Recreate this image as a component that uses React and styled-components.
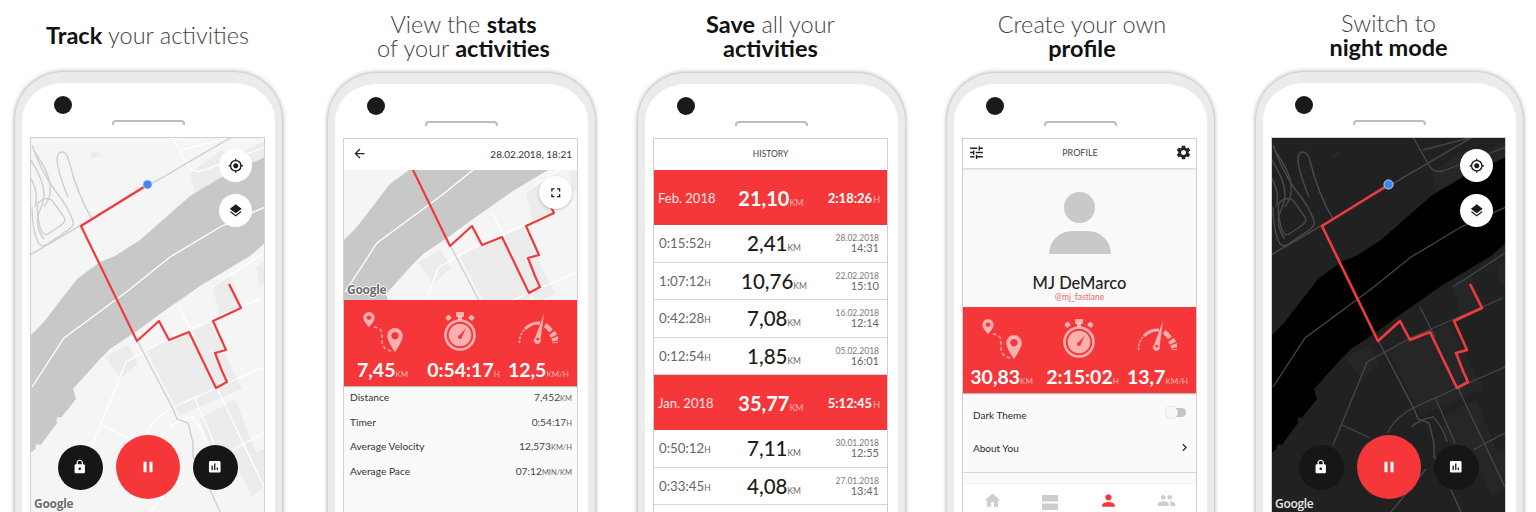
import React from "react";
import styled, { createGlobalStyle } from "styled-components";
import {
  MdArrowBack,
  MdAssessment,
  MdChevronRight,
  MdFullscreen,
  MdHome,
  MdLayers,
  MdLock,
  MdMyLocation,
  MdPause,
  MdPeople,
  MdPerson,
  MdSettings,
  MdTune,
} from "react-icons/md";

const RED = "#f53739";

const Global = createGlobalStyle`
  html, body { margin: 0; padding: 0; background: #fff; }
  body { font-family: "Lato", "Liberation Sans", sans-serif; }
`;

const Page = styled.div`
  display: flex;
  width: 1536px;
  height: 512px;
  overflow: hidden;
  padding-left: 15px;
  box-sizing: border-box;
`;

const Column = styled.section`
  flex: 0 0 267px;
  margin-left: ${p => p.$gap || 0}px;
`;

const Title = styled.h2`
  height: ${p => (p.$low ? 73 : 72)}px;
  margin: 0;
  padding: 0 0 2px ${p => p.$nudge || 0}px;
  display: flex;
  flex-direction: column;
  justify-content: center;
  align-items: center;
  font-size: 23.5px;
  line-height: 24px;
  font-weight: 300;
  color: #444;
  white-space: nowrap;
  box-sizing: border-box;
  transform: translateX(-1px);

  b {
    display: inline-block;
    font-weight: 700;
    color: #111;
  }
`;

const Phone = styled.div`
  height: 520px;
  box-sizing: border-box;
  padding: 0 10px 0 9px;
  background: #fff;
  border: solid #ebebeb;
  border-width: 11px 7px 0;
  border-radius: 48px 48px 0 0;
  box-shadow: 0 0 5px rgba(0, 0, 0, 0.42);
`;

const Camera = styled.div`
  width: 18px;
  height: 18px;
  margin: 13px 0 0 23px;
  border-radius: 50%;
  background: #1a1a1a;
`;

const Speaker = styled.div`
  width: 73px;
  height: 5px;
  margin: 6px auto 13px;
  box-sizing: border-box;
  border: 2px solid #bdbdbd;
  border-bottom: 0;
  border-radius: 4px 4px 0 0;
`;

const Screen = styled.div`
  width: 233px;
  height: 376px;
  overflow: hidden;
  display: flex;
  flex-direction: column;
  background: ${p => p.$bg || "#fff"};
  box-shadow: 0 0 0 1px #cfcfcf;
  color: #333;
`;

const MapBox = styled.div`
  position: relative;
  flex: 0 0 ${p => p.$h}px;
  height: ${p => p.$h}px;
  overflow: hidden;

  svg.map {
    display: block;
  }
`;

const GoogleMark = styled.span`
  position: absolute;
  left: 3px;
  bottom: 2px;
  font-family: "Open Sans", sans-serif;
  font-size: 12px;
  font-weight: ${p => (p.$dark ? 600 : 700)};
  letter-spacing: -0.3px;
  color: ${p => (p.$dark ? "#e8e8e8" : "#6c6c6c")};
  text-shadow: ${p =>
    p.$dark
      ? "none"
      : "1px 0 0 #fff, -1px 0 0 #fff, 0 1px 0 #fff, 0 -1px 0 #fff"};
`;

const RoundButton = styled.button`
  position: absolute;
  left: ${p => p.$left || 188}px;
  top: ${p => p.$top}px;
  width: 33px;
  height: 33px;
  padding: 0;
  border: 0;
  border-radius: 50%;
  background: #fff;
  color: #1a1a1a;
  font-size: 15.5px;
  display: flex;
  align-items: center;
  justify-content: center;
  box-shadow: ${p => (p.$shadow ? "0 1px 3px rgba(0,0,0,.25)" : "none")};
`;

const Controls = styled.div`
  position: absolute;
  left: 0;
  right: 0;
  top: 297px;
  height: 64px;
  display: flex;
  align-items: center;
  justify-content: center;
  gap: 13px;
`;

const ControlButton = styled.button`
  width: ${p => (p.$main ? 64 : 45)}px;
  height: ${p => (p.$main ? 64 : 45)}px;
  padding: 0;
  border: 0;
  border-radius: 50%;
  background: ${p => (p.$main ? RED : "#171515")};
  color: #fff;
  font-size: ${p => (p.$main ? 18 : 15.5)}px;
  display: flex;
  align-items: center;
  justify-content: center;
`;

const Header = styled.header`
  flex: 0 0 ${p => p.$h || 31}px;
  display: flex;
  align-items: center;
  justify-content: space-between;
  box-sizing: border-box;
  padding: ${p => p.$pad || "0 5px 2px 8px"};
  background: #fff;
  color: #222;
  font-size: ${p => p.$icon || 15}px;
  box-shadow: ${p => (p.$line ? "0 1px 2px rgba(0,0,0,.18)" : "none")};
  position: relative;
`;

const HeaderDate = styled.span`
  font-size: 10px;
  color: #333;
`;

const HeaderLabel = styled.span`
  font-size: 9px;
  color: #444;
`;

const HeaderTitle = styled.div`
  flex: 0 0 31px;
  box-sizing: border-box;
  padding-bottom: 2px;
  display: flex;
  align-items: center;
  justify-content: center;
  font-size: 8.5px;
  color: #444;
  background: #fff;
`;

const StatsPanel = styled.div`
  flex: 0 0 ${p => p.$h}px;
  display: grid;
  grid-template-columns: repeat(3, 1fr);
  background: ${RED};
  box-shadow: 0 1px 1px rgba(0, 0, 0, 0.25);
  position: relative;
`;

const Stat = styled.div`
  display: flex;
  flex-direction: column;
  align-items: center;
  padding-top: 12px;

  svg {
    height: 40px;
    display: block;
  }
`;

const StatValue = styled.div`
  margin: 6px 0 0 ${p => p.$nudge || 0}px;
  font-size: 19.5px;
  line-height: 24px;
  font-weight: 700;
  color: #fff;
  white-space: nowrap;
`;

const Unit = styled.small`
  font-size: ${p => p.$size || 8}px;
  font-weight: 400;
  margin-left: ${p => p.$space || 0}px;
  color: ${p => p.$color || "#666"};
`;

const InfoList = styled.div`
  flex: 1;
  margin-top: -1px;
  padding-top: 0;
  background: #fafafa;
`;

const InfoRow = styled.div`
  height: 24.5px;
  display: flex;
  align-items: center;
  justify-content: space-between;
  padding: 0 5px 0 6px;
  font-size: 10.2px;
  color: #333;
`;

const InfoValue = styled.span`
  color: #444;
`;

const MonthRow = styled.div`
  flex: 0 0 55px;
  display: grid;
  grid-template-columns: 1fr auto 1fr;
  align-items: center;
  padding: 0 7px 0 4px;
  background: ${RED};
  color: #fff;
`;

const MonthName = styled.span`
  font-size: 13px;
  color: #fde8e8;
`;

const MonthDistance = styled.span`
  font-size: 20px;
  font-weight: 700;
  padding-left: 4px;
`;

const MonthTime = styled.span`
  text-align: right;
  font-size: 13px;
  font-weight: 700;
`;

const RunRow = styled.div`
  flex: 0 0 37.5px;
  box-sizing: border-box;
  display: grid;
  grid-template-columns: 1fr auto 1fr;
  align-items: center;
  padding: 0 8px 0 5px;
  border-bottom: 1px solid #d6d6d6;
`;

const RunTime = styled.span`
  font-size: 13.3px;
  color: #666;
`;

const RunDistance = styled.span`
  font-size: 20.5px;
  font-weight: 500;
  color: #1c1c1c;
  padding-left: 10px;
`;

const RunWhen = styled.span`
  display: flex;
  flex-direction: column;
  align-items: flex-end;
  font-size: 8.5px;
  line-height: 10px;
  color: #7a7a7a;

  b {
    font-size: 11px;
    font-weight: 400;
    color: #666;
  }
`;

const ProfileTop = styled.div`
  flex: 0 0 139px;
  display: flex;
  flex-direction: column;
  align-items: center;
  background: #f9f9f9;
`;

const Avatar = styled.div`
  width: 94px;
  height: 94px;
  margin-top: 10px;
  border-radius: 50%;
  border: 1px solid #f6f6f6;
  display: flex;
  flex-direction: column;
  align-items: center;
  box-sizing: border-box;
`;

const AvatarHead = styled.div`
  width: 31px;
  height: 31px;
  margin-top: 13px;
  border-radius: 50%;
  background: #c9c9c9;
`;

const AvatarBody = styled.div`
  width: 62px;
  height: 23px;
  margin-top: 8px;
  border-radius: 31px 31px 0 0;
  background: #c9c9c9;
`;

const ProfileName = styled.div`
  margin-top: 1px;
  font-size: 16.5px;
  line-height: 20px;
  font-weight: 500;
  color: #222;
`;

const ProfileHandle = styled.div`
  font-size: 8.5px;
  line-height: 9px;
  color: #e86a6a;
`;

const SettingsList = styled.div`
  flex: 0 0 80px;
  padding: 5px 4px 0 10px;
  box-sizing: border-box;
  background: #fafafa;
  border-bottom: 1px solid #d8d8d8;
`;

const SettingRow = styled.div`
  height: 33px;
  display: flex;
  align-items: center;
  justify-content: space-between;
  font-size: 10px;
  color: #2a2a2a;
`;

const Toggle = styled.div`
  position: relative;
  width: 20px;
  height: 9px;
  margin: -4px 6px 0 0;
  border-radius: 5px;
  background: #c4c4c4;

  &::before {
    content: "";
    position: absolute;
    left: -1px;
    top: -2px;
    width: 13px;
    height: 13px;
    border-radius: 50%;
    background: #f6f6f6;
    box-shadow: 0 0 1px rgba(0, 0, 0, 0.25);
  }
`;

const BottomNav = styled.nav`
  margin-top: 10px;
  flex: 1;
  display: grid;
  grid-template-columns: repeat(4, 1fr);
  justify-items: center;
  padding-top: 7px;
  background: #fff;
  border-top: 1px solid #f0f0f0;
  font-size: 19px;
`;

const NavItem = styled.span`
  color: ${p => (p.$active ? RED : "#cdcdcd")};
`;

// the route is the same in every map, only the window onto it changes
const ROUTE =
  "117,48 51,89 107,204 129,184 139,203 159,195 186,251 197,245 192,234 185,216 196,213 183,184 211,171 199,147";

const WATER =
  "0,199 13,186 47,142 70,125 85,119 110,103 160,59 195,38 235,20 235,106 220,119 170,149 130,177 107,194 80,212 70,222 43,252 46,262 30,282 10,309 0,316";

const BLOCKS = [
  "160,36 190,14 214,14 235,4 235,22 195,38 165,56",
  "182,147 200,138 212,168 190,180",
  "226,130 235,124 235,146 230,150",
  "116,213 180,186 212,252 150,278",
  "170,282 205,262 228,320 190,340",
  "50,172 62,150 66,160 56,180",
  "205,325 234,312 234,350 222,360",
  "75,220 98,208 108,226 90,242",
  "60,17 68,14 70,19 62,22",
];

const SOFT_ROADS = [
  "M2,250 L34,201 L99,153 L140,120 L190,90 L235,70",
  "M96,225 L139,201 L232,161",
  "M142,271 L186,251 L234,230",
  "M62,308 L86,250 L96,225",
  "M71,288 L99,301",
  "M117,296 Q122,282 142,271",
  "M187,251 L234,350",
  "M164,260 L184,306",
  "M202,313 L234,296",
  "M149,170 L164,200",
  "M182,150 L234,116",
  "M142,0 L159,30 Q164,36 172,34 L235,10",
  "M152,13 L202,0",
  "M140,290 Q150,282 162,280 Q172,290 176,305",
  "M155,332 L120,375",
];

const HARD_ROADS = [
  "M0,118 L200,1",
  "M108,205 L143,272 L147,282 L158,286 L163,306 L163,319 L177,346 L190,375",
  "M2,8 C8,25 14,38 24,52 C32,62 40,74 43,84 C44,88 42,90 38,93 L16,108 C12,110 9,108 7,103 C3,92 2,82 2,70",
  "M0,22 C8,34 14,46 14,58 C14,66 10,72 8,78 C6,88 10,98 14,102",
  "M8,66 C14,60 20,60 24,66 L34,80 C36,84 34,86 30,89 L18,97 C14,99 12,96 10,90 C8,82 6,74 8,66",
  "M0,40 C6,50 8,60 5,70",
  "M4,14 C14,28 22,42 20,56 C20,62 16,66 14,70",
  "M27,24 C27,12 36,12 39,24 C44,44 50,62 62,82",
  "M27,24 C28,34 33,48 38,60",
];

const RouteMap = ({ dark, dot, shift = 1, height }) => (
  <svg className="map" width="233" height={height} viewBox={`1 ${shift} 233 ${height}`}>
    <rect x="0" y={shift} width="235" height={height} fill={dark ? "#212121" : "#f5f5f5"} />
    {BLOCKS.map(points => (
      <polygon key={points} points={points} fill={dark ? "#262626" : "#ececec"} />
    ))}
    <polygon points={WATER} fill={dark ? "#000" : "#c8c8c8"} />
    <g stroke={dark ? "#212121" : "#f5f5f5"} strokeWidth="5">
      <line x1="27" y1="282" x2="45" y2="289" />
      <line x1="25" y1="293" x2="42" y2="301" />
      <line x1="6" y1="309" x2="27" y2="319" />
    </g>
    <g fill="none" stroke={dark ? "#474747" : "#fff"} strokeWidth="1.3">
      {SOFT_ROADS.map(d => (
        <path key={d} d={d} />
      ))}
    </g>
    <g fill="none" stroke={dark ? "#4a4a4a" : "#cfcfcf"} strokeWidth="1.4">
      {HARD_ROADS.map(d => (
        <path key={d} d={d} />
      ))}
    </g>
    <polyline
      points={ROUTE}
      fill="none"
      stroke="#ef3b3e"
      strokeWidth={dark ? 2.6 : 2.2}
      strokeLinejoin="round"
    />
    {dot && <circle cx="117.5" cy="47.5" r="4.6" fill="#4285f4" stroke="#dfe9fb" strokeWidth="0.8" />}
  </svg>
);

const PIN = "rgba(255,255,255,.6)";

const RouteIcon = () => (
  <svg viewBox="0 0 40 40" width="40">
    <path
      fillRule="evenodd"
      fill={PIN}
      d="M6,0 a5.7,5.7 0 0 1 5.7,5.7 C11.7,9.5 6,15 6,15 S0.3,9.5 0.3,5.7 A5.7,5.7 0 0 1 6,0 Z M6,3.4 a2.3,2.3 0 1 0 0.01,0 Z"
    />
    <path
      fillRule="evenodd"
      fill={PIN}
      d="M32,16 a7.7,7.7 0 0 1 7.7,7.7 C39.7,29.5 32,40 32,40 S24.3,29.5 24.3,23.7 A7.7,7.7 0 0 1 32,16 Z M32,20 a3.7,3.7 0 1 0 0.01,0 Z"
    />
    <path
      d="M11,15 C17,16 19,18 19,23 C19,30 18,37 28,39"
      fill="none"
      stroke={PIN}
      strokeWidth="1.5"
      strokeDasharray="3.5 2.5"
    />
  </svg>
);

const TimerIcon = () => (
  <svg viewBox="0 0 34 40" width="34">
    <rect x="13" y="0" width="8" height="5" rx="1" fill={PIN} />
    <rect x="15" y="4" width="4" height="4" fill={PIN} />
    <rect x="3" y="3.4" width="5" height="4.6" rx="1" fill={PIN} transform="rotate(-35 5.5 5.7)" />
    <rect x="26" y="3.4" width="5" height="4.6" rx="1" fill={PIN} transform="rotate(35 28.5 5.7)" />
    <circle cx="17" cy="23" r="14.5" fill="none" stroke={PIN} strokeWidth="2.6" />
    <circle cx="17" cy="23" r="11.3" fill={PIN} />
    <path d="M15.6,24.6 L23,16 L18.6,25.8 Z" fill={RED} />
    <circle cx="17" cy="25" r="2" fill={RED} />
  </svg>
);

const GaugeIcon = () => (
  <svg viewBox="0 0 40 40" width="40">
    <path d="M1.5,31 A18.5,18.5 0 0 1 6,18" fill="none" stroke={PIN} strokeWidth="1.5" strokeDasharray="2.5 1.5" />
    <path d="M7,17 A18.5,18.5 0 0 1 22,11" fill="none" stroke={PIN} strokeWidth="3" />
    <path d="M27,13 A18.5,18.5 0 0 1 33,19" fill="none" stroke={PIN} strokeWidth="4.5" />
    <path d="M34,21 A18.5,18.5 0 0 1 38,31" fill="none" stroke={PIN} strokeWidth="7" strokeDasharray="3.6 1.4" />
    <path d="M17,26 L26,2 L22.6,27.6 A3.4,3.4 0 1 1 17,26 Z" fill={PIN} />
    <circle cx="19.8" cy="27.2" r="1.4" fill={RED} />
  </svg>
);

const AgendaIcon = () => (
  <svg viewBox="0 0 16 15" width="16" height="15">
    <rect x="0" y="0" width="16" height="6.5" fill="currentColor" />
    <rect x="0" y="8.5" width="16" height="6.5" fill="currentColor" />
  </svg>
);

const StatsBlock = ({ h, distance, time, speed }) => (
  <StatsPanel $h={h}>
    <Stat>
      <RouteIcon />
      <StatValue>
        {distance}
        <Unit $size={8} $color="#fbb4b4">KM</Unit>
      </StatValue>
    </Stat>
    <Stat>
      <TimerIcon />
      <StatValue $nudge={6}>
        {time}
        <Unit $size={8} $color="#fbb4b4">H</Unit>
      </StatValue>
    </Stat>
    <Stat>
      <GaugeIcon />
      <StatValue>
        {speed}
        <Unit $size={8} $color="#fbb4b4">KM/H</Unit>
      </StatValue>
    </Stat>
  </StatsPanel>
);

const TrackScreen = ({ dark }) => (
  <Screen>
    <MapBox $h={376}>
      <RouteMap dark={dark} dot height={376} />
      <RoundButton $top={11}>
        <MdMyLocation />
      </RoundButton>
      <RoundButton $top={56}>
        <MdLayers />
      </RoundButton>
      <Controls>
        <ControlButton>
          <MdLock />
        </ControlButton>
        <ControlButton $main>
          <MdPause />
        </ControlButton>
        <ControlButton>
          <MdAssessment />
        </ControlButton>
      </Controls>
      <GoogleMark $dark={dark}>Google</GoogleMark>
    </MapBox>
  </Screen>
);

const DETAILS = [
  ["Distance", "7,452", "KM"],
  ["Timer", "0:54:17", "H"],
  ["Average Velocity", "12,573", "KM/H"],
  ["Average Pace", "07:12", "MIN/KM"],
];

const StatsScreen = () => (
  <Screen>
    <Header>
      <MdArrowBack />
      <HeaderDate>28.02.2018, 18:21</HeaderDate>
    </Header>
    <MapBox $h={130}>
      <RouteMap shift={128} height={130} />
      <RoundButton $top={6} $left={195} $shadow>
        <MdFullscreen />
      </RoundButton>
      <GoogleMark>Google</GoogleMark>
    </MapBox>
    <StatsBlock h={85} distance="7,45" time="0:54:17" speed="12,5" />
    <InfoList>
      {DETAILS.map(([label, value, unit]) => (
        <InfoRow key={label}>
          {label}
          <InfoValue>
            {value}
            <Unit $size={7.5}>{unit}</Unit>
          </InfoValue>
        </InfoRow>
      ))}
    </InfoList>
  </Screen>
);

const Month = ({ name, distance, time }) => (
  <MonthRow>
    <MonthName>{name}</MonthName>
    <MonthDistance>
      {distance}
      <Unit $size={9} $color="#fbb4b4">KM</Unit>
    </MonthDistance>
    <MonthTime>
      {time}
      <Unit $size={9} $space={1} $color="#fbb4b4">H</Unit>
    </MonthTime>
  </MonthRow>
);

const Run = ({ time, distance, date, clock }) => (
  <RunRow>
    <RunTime>
      {time}
      <Unit $size={8.5}>H</Unit>
    </RunTime>
    <RunDistance>
      {distance}
      <Unit $size={8.5}>KM</Unit>
    </RunDistance>
    <RunWhen>
      {date}
      <b>{clock}</b>
    </RunWhen>
  </RunRow>
);

const HistoryScreen = () => (
  <Screen>
    <HeaderTitle>HISTORY</HeaderTitle>
    <Month name="Feb. 2018" distance="21,10" time="2:18:26" />
    <Run time="0:15:52" distance="2,41" date="28.02.2018" clock="14:31" />
    <Run time="1:07:12" distance="10,76" date="22.02.2018" clock="15:10" />
    <Run time="0:42:28" distance="7,08" date="16.02.2018" clock="12:14" />
    <Run time="0:12:54" distance="1,85" date="05.02.2018" clock="16:01" />
    <Month name="Jan. 2018" distance="35,77" time="5:12:45" />
    <Run time="0:50:12" distance="7,11" date="30.01.2018" clock="12:55" />
    <Run time="0:33:45" distance="4,08" date="27.01.2018" clock="13:41" />
  </Screen>
);

const ProfileScreen = () => (
  <Screen $bg="#fafafa">
    <Header $h={29} $line $pad="0 4px 3px 5px" $icon={17}>
      <MdTune />
      <HeaderLabel>PROFILE</HeaderLabel>
      <MdSettings />
    </Header>
    <ProfileTop>
      <Avatar>
        <AvatarHead />
        <AvatarBody />
      </Avatar>
      <ProfileName>MJ DeMarco</ProfileName>
      <ProfileHandle>@mj_fastlane</ProfileHandle>
    </ProfileTop>
    <StatsBlock h={85} distance="30,83" time="2:15:02" speed="13,7" />
    <SettingsList>
      <SettingRow>
        Dark Theme
        <Toggle />
      </SettingRow>
      <SettingRow>
        About You
        <MdChevronRight size={15} />
      </SettingRow>
    </SettingsList>
    <BottomNav>
      <NavItem>
        <MdHome />
      </NavItem>
      <NavItem>
        <AgendaIcon />
      </NavItem>
      <NavItem $active>
        <MdPerson />
      </NavItem>
      <NavItem>
        <MdPeople />
      </NavItem>
    </BottomNav>
  </Screen>
);

const Device = ({ gap, low, nudge, title, children }) => (
  <Column $gap={gap}>
    <Title $low={low} $nudge={nudge}>
      {title}
    </Title>
    <Phone>
      <Camera />
      <Speaker />
      {children}
    </Phone>
  </Column>
);

const App = () => (
  <>
    <Global />
    <Page>
      <Device title={<span><b>Track</b> your activities</span>}>
        <TrackScreen />
      </Device>
      <Device
        gap={46}
        low
        nudge={6}
        title={
          <>
            <span>View the <b>stats</b></span>
            <span>of your <b>activities</b></span>
          </>
        }
      >
        <StatsScreen />
      </Device>
      <Device
        gap={43}
        low
        title={
          <>
            <span><b>Save</b> all your</span>
            <span><b>activities</b></span>
          </>
        }
      >
        <HistoryScreen />
      </Device>
      <Device
        gap={42}
        low
        nudge={5}
        title={
          <>
            <span>Create your own</span>
            <span><b>profile</b></span>
          </>
        }
      >
        <ProfileScreen />
      </Device>
      <Device
        gap={42}
        title={
          <>
            <span>Switch to</span>
            <span><b>night mode</b></span>
          </>
        }
      >
        <TrackScreen dark />
      </Device>
    </Page>
  </>
);

export default App;
